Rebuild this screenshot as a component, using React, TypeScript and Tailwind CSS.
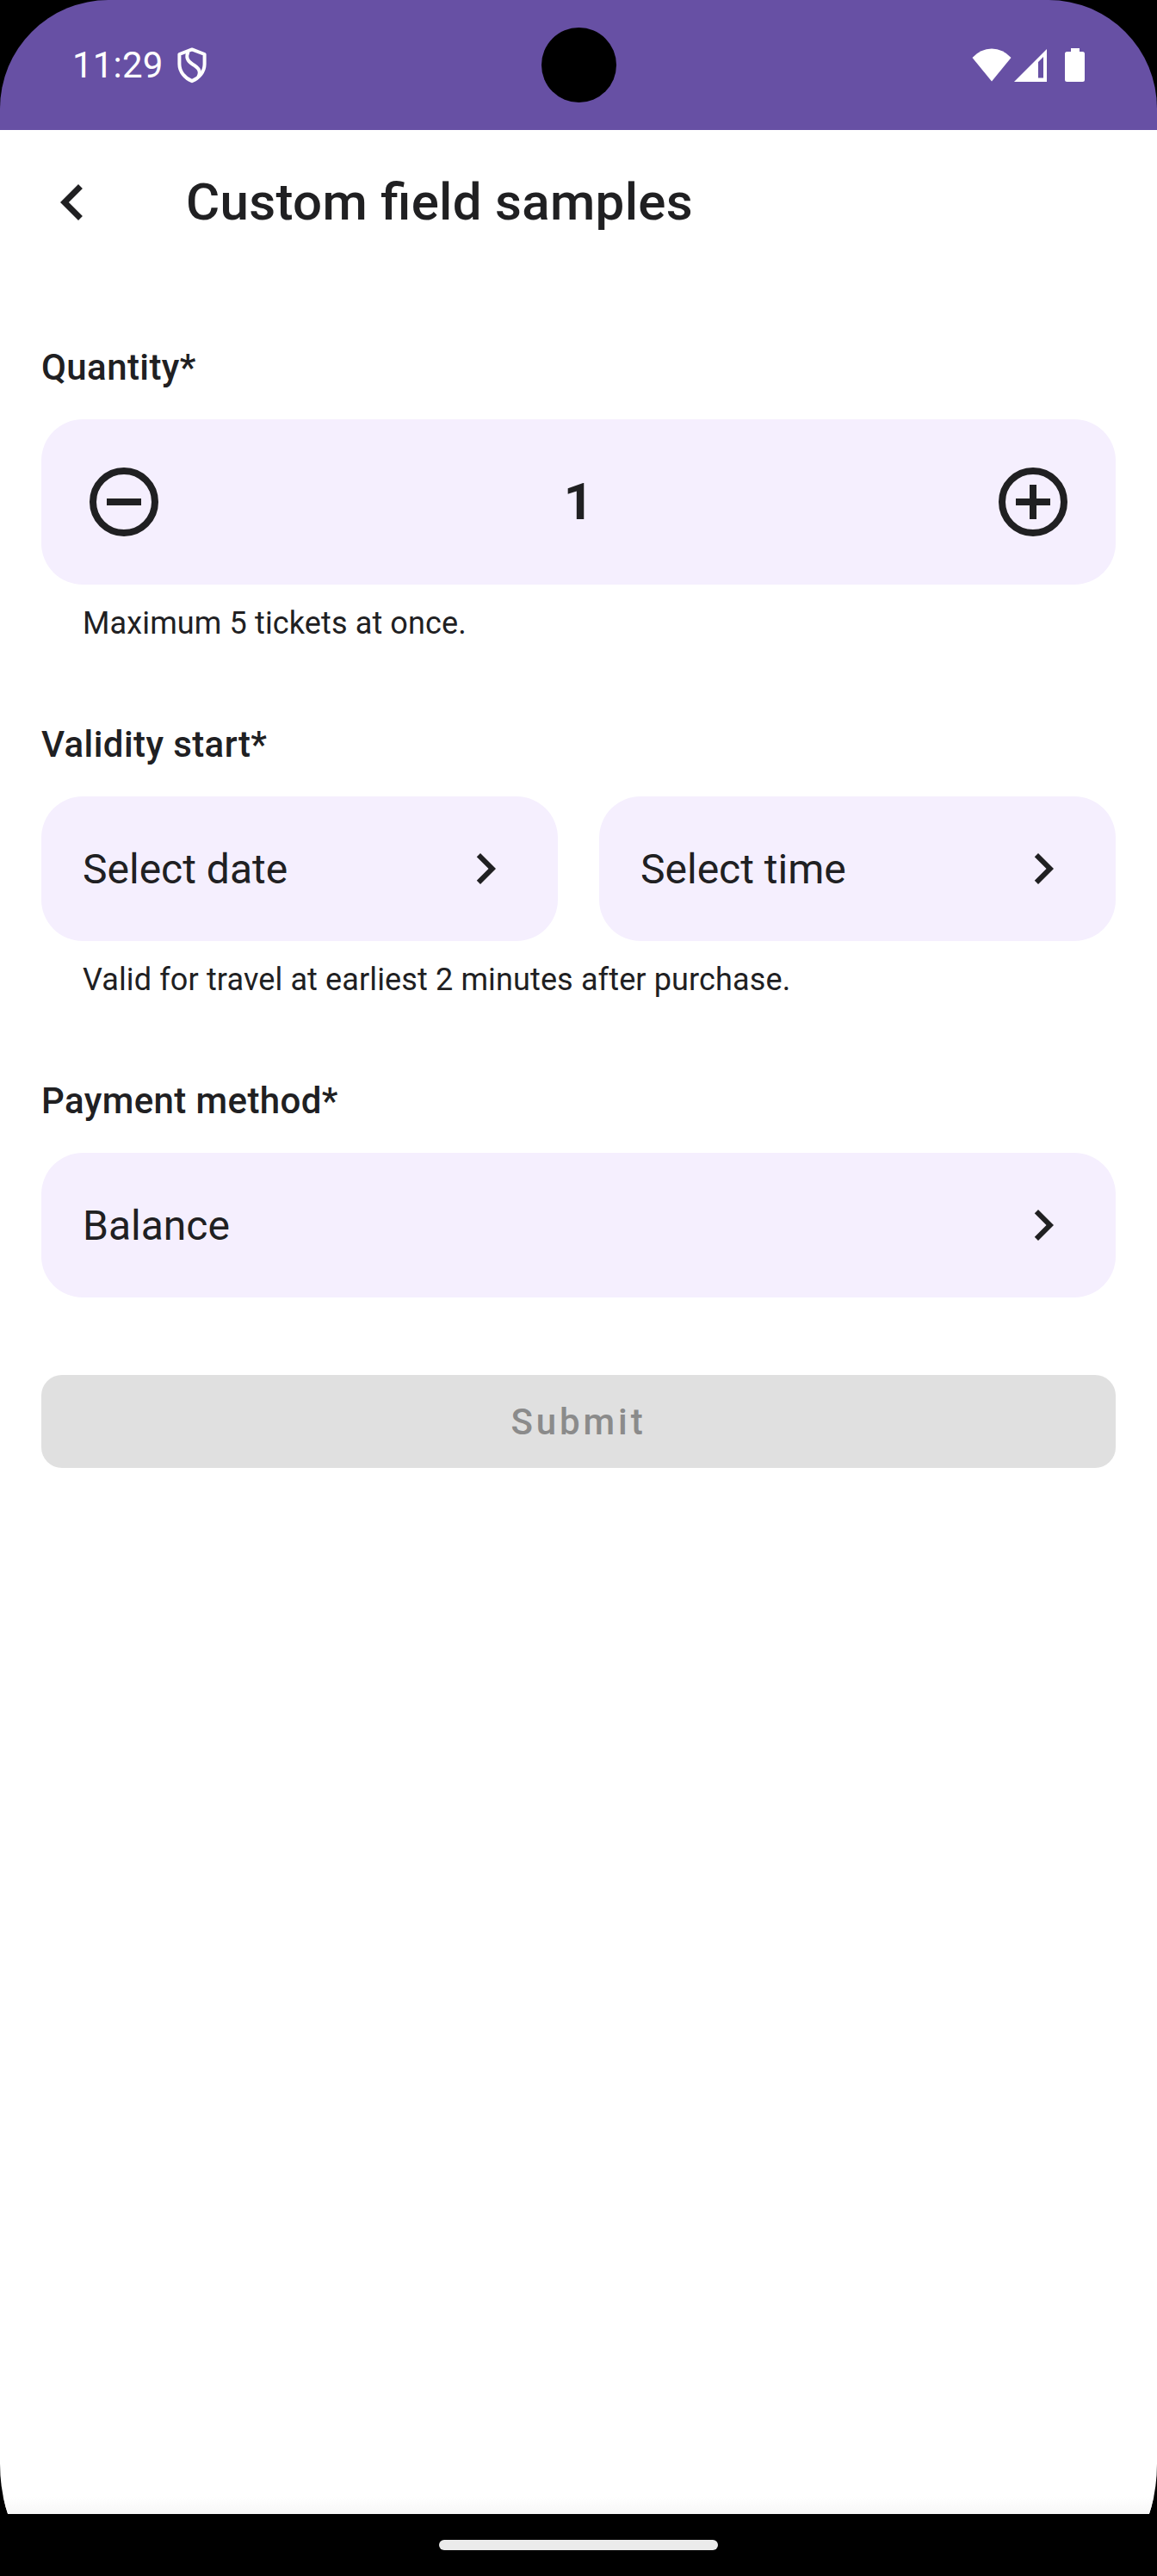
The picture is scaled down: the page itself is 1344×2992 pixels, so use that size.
import type { ReactNode } from "react";

function Chevron() {
  return (
    <svg viewBox="0 0 24 24" className="size-[72px]" fill="currentColor">
      <path d="M10 6 8.59 7.41 13.17 12l-4.58 4.59L10 18l6-6z" />
    </svg>
  );
}

function StatusBar() {
  return (
    <header className="relative flex h-[151px] items-center justify-between rounded-t-[126px] bg-[#6750a4] pl-[84px] pr-[84px] text-white">
      <div className="flex items-center">
        <span className="text-[42px] leading-[50px] tracking-[0.2px]">11:29</span>
        <svg viewBox="0 0 34 42" className="ml-4 h-[42px] w-[34px]" fill="none" stroke="currentColor" strokeWidth="4" strokeLinejoin="round">
          <path d="M17 2.4 31.6 8v11.5C31.6 28.500 25 35.800 17 39.200 9 35.800 2.400 28.500 2.400 19.500V8z" />
          <path d="M12.500 5C9.500 12 12 16 17.500 19.500 24 23.500 28 27 24.500 34" />
        </svg>
      </div>
      <div className="absolute left-[628.5px] top-[31.5px] size-[87px] rounded-full bg-black" />
      <div className="flex items-center">
        <svg viewBox="0 0 46 39" className="h-[39px] w-[46px]" fill="currentColor">
          <path d="M23 38.500 0.500 11Q10 0.500 23 0.500T45.500 11z" />
        </svg>
        <svg viewBox="0 0 38 38" className="ml-[3px] h-[38px] w-[38px]" fill="currentColor">
          <path fillRule="evenodd" d="M38 0v38H0zM34 9 28 15v18.500h6z" />
        </svg>
        <svg viewBox="0 0 23 39" className="ml-[21px] h-[39px] w-[23px]" fill="currentColor">
          <path d="M7 0h10v4h3.500Q23 4 23 6.500V36.500Q23 39 20.500 39H2.500Q0 39 0 36.500V6.500Q0 4 2.500 4H7z" />
        </svg>
      </div>
    </header>
  );
}

function Field({ label, hint, children }: { label: string; hint?: string; children: ReactNode }) {
  return (
    <section>
      <h2 className="mb-[30px] text-[42px] font-medium leading-[60px] tracking-[0.4px]">{label}</h2>
      {children}
      {hint && <p className="mt-[21px] pl-12 text-[36px] leading-[48px] tracking-[0.13px]">{hint}</p>}
    </section>
  );
}

function Select({ text }: { text: string }) {
  return (
    <button className="flex h-[168px] flex-1 items-center justify-between rounded-[48px] bg-[#f5effe] px-12 text-[48px] leading-[72px]">
      <span className="pt-0.5">{text}</span>
      <Chevron />
    </button>
  );
}

export default function App() {
  return (
    <div className="flex h-[2992px] w-[1344px] flex-col overflow-hidden bg-black font-['Roboto',sans-serif] text-[#202022]">
      <StatusBar />
      <div className="flex h-[2769px] flex-col bg-black">
        <div className="flex h-[168px] shrink-0 items-center bg-white pl-[42px]">
          <svg viewBox="0 0 24 24" className="size-[84px]" fill="currentColor">
            <path d="M15.410 7.410 14 6l-6 6 6 6 1.410-1.410L10.830 12z" />
          </svg>
          <h1 className="ml-[90px] text-[60px] font-medium leading-[72px] tracking-[0.33px] [font-feature-settings:'liga'_1]">Custom field samples</h1>
        </div>
        {/* The page runs on under the navigation bar, so only the start of its bottom corners shows. */}
        <main className="-mb-[72px] flex flex-1 flex-col overflow-hidden bg-white [border-bottom-left-radius:86px_130px] [border-bottom-right-radius:86px_130px]">
          <div className="flex flex-1 flex-col px-12 pt-[78px]">
            <Field label="Quantity*" hint="Maximum 5 tickets at once.">
              <div className="flex h-[192px] items-center justify-between rounded-[48px] bg-[#f5effe] px-12">
                <svg viewBox="0 0 24 24" className="size-24" fill="none" stroke="currentColor" strokeWidth="2">
                  <circle cx="12" cy="12" r="9" />
                  <path d="M7 12h10" />
                </svg>
                <span className="text-[60px] font-bold leading-[72px]">1</span>
                <svg viewBox="0 0 24 24" className="size-24" fill="none" stroke="currentColor" strokeWidth="2">
                  <circle cx="12" cy="12" r="9" />
                  <path d="M7 12h10M12 7v10" />
                </svg>
              </div>
            </Field>
            <div className="mt-[87px]">
              <Field label="Validity start*" hint="Valid for travel at earliest 2 minutes after purchase.">
                <div className="flex gap-12">
                  <Select text="Select date" />
                  <Select text="Select time" />
                </div>
              </Field>
            </div>
            <div className="mt-[87px]">
              <Field label="Payment method*">
                <div className="flex">
                  <Select text="Balance" />
                </div>
              </Field>
            </div>
            <button className="mt-[90px] flex h-[108px] items-center justify-center rounded-[24px] bg-[#e0e0e0] text-[42px] font-medium tracking-[3.9px] text-[#8b8b8b]">
              Submit
            </button>
          </div>
          <div className="mb-[72px] h-5 shrink-0 bg-linear-to-b from-white to-[#f7f7f7]" />
        </main>
      </div>
      <footer className="relative flex h-[72px] shrink-0 items-center justify-center bg-black">
        <div className="h-3 w-[324px] rounded-full bg-[#ebebeb]" />
      </footer>
    </div>
  );
}
